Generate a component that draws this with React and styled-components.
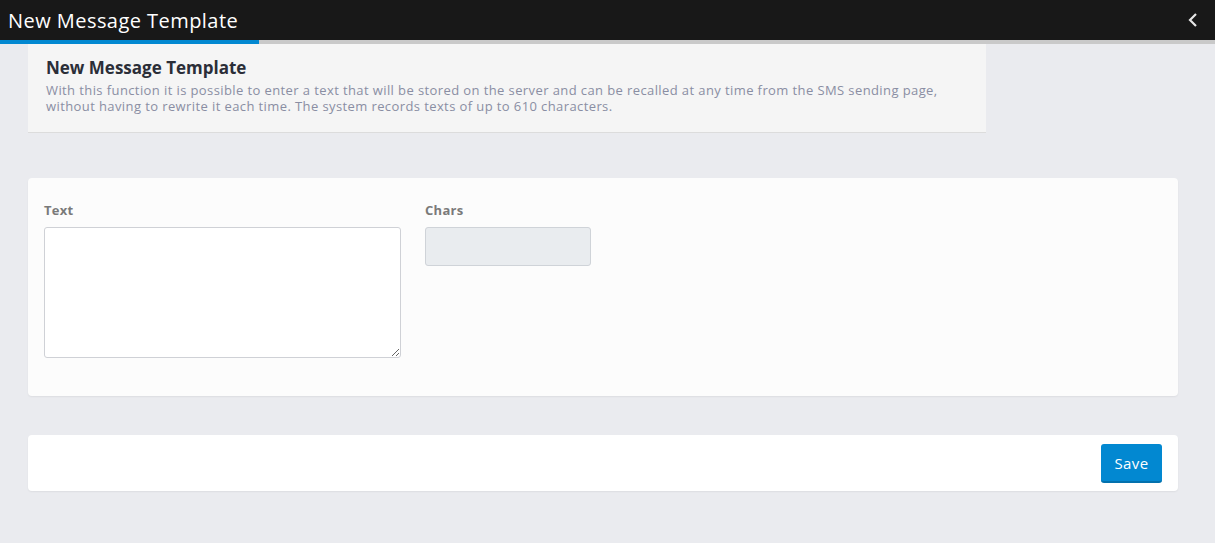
import React from "react";
import styled, { createGlobalStyle } from "styled-components";

const GlobalStyle = createGlobalStyle`
  html, body {
    margin: 0;
    padding: 0;
    background: #eaebef;
    font-family: "Open Sans", "Noto Sans", sans-serif;
  }
  * { box-sizing: border-box; }
`;

const Page = styled.div`
  min-height: 543px;
  background: #eaebef;
`;

const TopBar = styled.header`
  height: 40px;
  background: #181818;
  display: flex;
  align-items: center;
  justify-content: space-between;
  padding: 0 16px 0 8px;
`;

const TopTitle = styled.h1`
  margin: 0;
  color: #ffffff;
  font-size: 20px;
  font-weight: 400;
  letter-spacing: 0.45px;
`;

const BackButton = styled.button`
  background: none;
  border: none;
  padding: 0;
  display: flex;
  align-items: center;
  cursor: pointer;
`;

const Progress = styled.div`
  height: 4px;
  background: #c9c9c9;
  display: flex;
`;

const ProgressFill = styled.div`
  height: 100%;
  background: #0288d1;
`;

const Intro = styled.section`
  margin: 0 229px 0 28px;
  background: #f5f5f5;
  border-bottom: 1px solid #dcdcdc;
  padding: 12px 18px 18px;
`;

const IntroTitle = styled.h2`
  margin: 0 0 3px;
  font-size: 17px;
  font-weight: 700;
  color: #2b2e38;
  letter-spacing: 0;
`;

const IntroText = styled.p`
  margin: 0;
  font-size: 13px;
  line-height: 16px;
  color: #8a8ea3;
  letter-spacing: 0.4px;
`;

const Card = styled.section`
  margin: ${(p) => p.$top}px 37px 0 28px;
  background: ${(p) => p.$bg};
  border-radius: 4px;
  box-shadow: 0 1px 2px rgba(0, 0, 0, 0.06);
`;

const FormBody = styled.div`
  display: flex;
  gap: 24px;
  padding: 23px 16px 38px;
`;

const Field = styled.div`
  display: flex;
  flex-direction: column;
  gap: 8px;
  width: ${(p) => p.$width}px;
`;

const Label = styled.label`
  font-size: 13px;
  font-weight: 700;
  color: #7a7a7a;
  line-height: 18px;
  letter-spacing: 0.3px;
`;

const TextArea = styled.textarea`
  width: 100%;
  height: 131px;
  border: 1px solid #cfd1d6;
  border-radius: 3px;
  background: #ffffff;
  font-family: inherit;
  font-size: 13px;
  padding: 6px 8px;
  outline: none;
`;

const CharsBox = styled.input`
  width: 100%;
  height: 39px;
  border: 1px solid #cfd3d8;
  border-radius: 3px;
  background: #e9ecef;
  outline: none;
`;

const Footer = styled.div`
  display: flex;
  justify-content: flex-end;
  padding: 9px 16px 8px;
`;

const SaveButton = styled.button`
  height: 39px;
  width: 61px;
  padding: 0;
  border: none;
  border-bottom: 2px solid #0371ad;
  border-radius: 3px;
  background: #0288d1;
  color: #ffffff;
  font-family: inherit;
  font-size: 15px;
  letter-spacing: 0.4px;
  cursor: pointer;
`;

const Chevron = () => (
  <svg width="12" height="16" viewBox="0 0 12 16" fill="none">
    <path d="M9 2 L3 8 L9 14" stroke="#e6e6e6" strokeWidth="2.2" />
  </svg>
);

export default function App() {
  return (
    <Page>
      <GlobalStyle />
      <TopBar>
        <TopTitle>New Message Template</TopTitle>
        <BackButton aria-label="Back">
          <Chevron />
        </BackButton>
      </TopBar>
      <Progress>
        <ProgressFill style={{ width: "259px" }} />
      </Progress>

      <Intro>
        <IntroTitle>New Message Template</IntroTitle>
        <IntroText>
          With this function it is possible to enter a text that will be stored on the server and can be
          recalled at any time from the SMS sending page, without having to rewrite it each time. The
          system records texts of up to 610 characters.
        </IntroText>
      </Intro>

      <Card $top={45} $bg="#fcfcfc">
        <FormBody>
          <Field $width={357}>
            <Label>Text</Label>
            <TextArea />
          </Field>
          <Field $width={166}>
            <Label>Chars</Label>
            <CharsBox readOnly />
          </Field>
        </FormBody>
      </Card>

      <Card $top={39} $bg="#ffffff">
        <Footer>
          <SaveButton>Save</SaveButton>
        </Footer>
      </Card>
    </Page>
  );
}
